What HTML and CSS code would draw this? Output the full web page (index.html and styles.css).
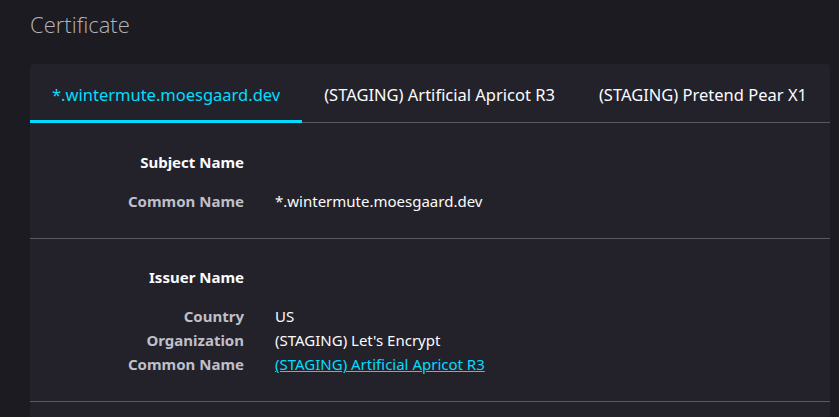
FILE: index.html
```html
<!DOCTYPE html>
<html lang="en">
<head>
<meta charset="utf-8">
<title>Certificate</title>
<link rel="stylesheet" href="styles.css">
</head>
<body>
<main class="page">
  <h1 class="title">Certificate</h1>
  <section class="card">
    <nav class="tabs">
      <div class="tab active">*.wintermute.moesgaard.dev</div>
      <div class="tab">(STAGING) Artificial Apricot R3</div>
      <div class="tab">(STAGING) Pretend Pear X1</div>
    </nav>
    <div class="section first">
      <div class="row heading"><span class="label">Subject Name</span></div>
      <div class="rows">
        <div class="row"><span class="label">Common Name</span><span class="value">*.wintermute.moesgaard.dev</span></div>
      </div>
    </div>
    <div class="section">
      <div class="row heading"><span class="label">Issuer Name</span></div>
      <div class="rows">
        <div class="row"><span class="label">Country</span><span class="value">US</span></div>
        <div class="row"><span class="label">Organization</span><span class="value">(STAGING) Let's Encrypt</span></div>
        <div class="row"><span class="label">Common Name</span><a class="value link" href="#">(STAGING) Artificial Apricot R3</a></div>
      </div>
    </div>
    <div class="section"></div>
  </section>
</main>
</body>
</html>
```

FILE: styles.css
```css
html, body {
  margin: 0;
  padding: 0;
  background: #1c1b22;
  height: 100%;
  overflow: hidden;
}
body {
  font-family: "Noto Sans", "Open Sans", sans-serif;
  color: #fbfbfe;
}
.page {
  padding: 0 9px 0 30px;
}
.title {
  margin: 0;
  padding-top: 8px;
  height: 64px;
  box-sizing: border-box;
  font-family: "Open Sans", "Noto Sans", sans-serif;
  font-weight: 300;
  font-size: 22px;
  line-height: 32px;
  color: #b4b3bb;
}
.card {
  background: #23222b;
  border-radius: 4px 4px 0 0;
}
.tabs {
  display: flex;
  height: 59px;
  box-sizing: border-box;
  border-bottom: 1px solid #5b5a62;
}
.tab {
  position: relative;
  padding: 0 22px;
  display: flex;
  align-items: center;
  font-size: 16.5px;
  color: #fbfbfe;
  padding-top: 3px;
}
.tab.active {
  color: #00ddff;
}
.tab.active::after {
  content: "";
  position: absolute;
  left: 0;
  right: 0;
  bottom: -1px;
  height: 3px;
  background: #00ddff;
}
.section {
  padding: 26px 0 25px;
  border-bottom: 1px solid #5b5a62;
}
.section.first {
  padding-top: 27px;
}
.section:last-child {
  border-bottom: 0;
  height: 40px;
}
.rows {
  margin-top: 15px;
}
.row {
  display: grid;
  grid-template-columns: 214px auto;
  column-gap: 31px;
  line-height: 24px;
  font-size: 15px;
}
.label {
  text-align: right;
  font-weight: 700;
  color: #bfbfc9;
}
.heading .label {
  color: #fbfbfe;
}
.value {
  color: #fbfbfe;
  justify-self: start;
}
.link {
  color: #00ddff;
  text-decoration: underline;
}
```
